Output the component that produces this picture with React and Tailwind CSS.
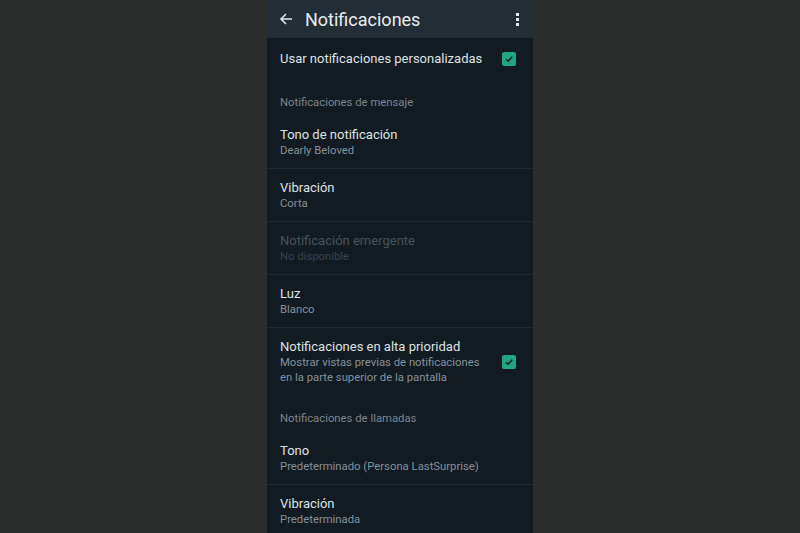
import React from "react";

const font = { fontFamily: "Roboto, 'Noto Sans', sans-serif" };

const Check = () => (
  <div className="w-[14px] h-[14px] rounded-[2px] bg-[#21a583] flex items-center justify-center shrink-0">
    <svg width="10" height="10" viewBox="0 0 10 10">
      <path d="M2 5.2 L4.1 7.2 L8.2 2.8" fill="none" stroke="#0f1a1e" strokeWidth="1.5" />
    </svg>
  </div>
);

const Item = ({ title, sub, disabled, border = true }) => (
  <div className={`h-[53px] shrink-0 flex flex-col justify-center px-[13px] ${border ? "border-b border-[#1e2a31]" : ""}`}>
    <div className={`text-[13px] leading-[16px] ${disabled ? "text-[#48525a]" : "text-[#dde2e4]"}`}>{title}</div>
    <div className={`text-[11.3px] leading-[15px] ${disabled ? "text-[#39434b]" : "text-[#84909a]"}`}>{sub}</div>
  </div>
);

const Section = ({ children }) => (
  <div className="h-[36px] shrink-0 pt-[16px] px-[13px] text-[11.3px] leading-[14px] text-[#7b868d]">{children}</div>
);

export default function App() {
  return (
    <div className="w-[800px] h-[533px] bg-[#2b2d2d] flex justify-center overflow-hidden" style={font}>
      <div className="w-[266px] h-full bg-[#121b22] flex flex-col overflow-hidden">
        {/* toolbar */}
        <div className="h-[38px] bg-[#232d35] flex items-center pl-[12px] pr-[14px] shrink-0">
          <svg width="14" height="14" viewBox="0 0 14 14">
            <path d="M13 7 H2 M7 2 L2 7 L7 12" fill="none" stroke="#e4e8ea" strokeWidth="1.5" />
          </svg>
          <div className="ml-[12px] text-[18px] text-[#e9edef] flex-1">Notificaciones</div>
          <div className="flex flex-col gap-[2px] items-center">
            <div className="w-[3px] h-[3px] bg-[#e4e8ea]"></div>
            <div className="w-[3px] h-[3px] bg-[#e4e8ea]"></div>
            <div className="w-[3px] h-[3px] bg-[#e4e8ea]"></div>
          </div>
        </div>

        <div className="h-[42px] shrink-0 flex items-center justify-between px-[13px] pr-[17px]">
          <div className="text-[13px] text-[#dde2e4]">Usar notificaciones personalizadas</div>
          <Check />
        </div>

        <Section>Notificaciones de mensaje</Section>
        <Item title="Tono de notificación" sub="Dearly Beloved" />
        <Item title="Vibración" sub="Corta" />
        <Item title="Notificación emergente" sub="No disponible" disabled />
        <Item title="Luz" sub="Blanco" />

        <div className="h-[68px] shrink-0 flex items-center justify-between px-[13px] pr-[17px]">
          <div>
            <div className="text-[13px] leading-[16px] text-[#dde2e4]">Notificaciones en alta prioridad</div>
            <div className="text-[11.3px] leading-[15px] text-[#84909a] w-[210px]">
              Mostrar vistas previas de notificaciones en la parte superior de la pantalla
            </div>
          </div>
          <Check />
        </div>

        <Section>Notificaciones de llamadas</Section>
        <Item title="Tono" sub="Predeterminado (Persona LastSurprise)" />
        <Item title="Vibración" sub="Predeterminada" border={false} />
      </div>
    </div>
  );
}
